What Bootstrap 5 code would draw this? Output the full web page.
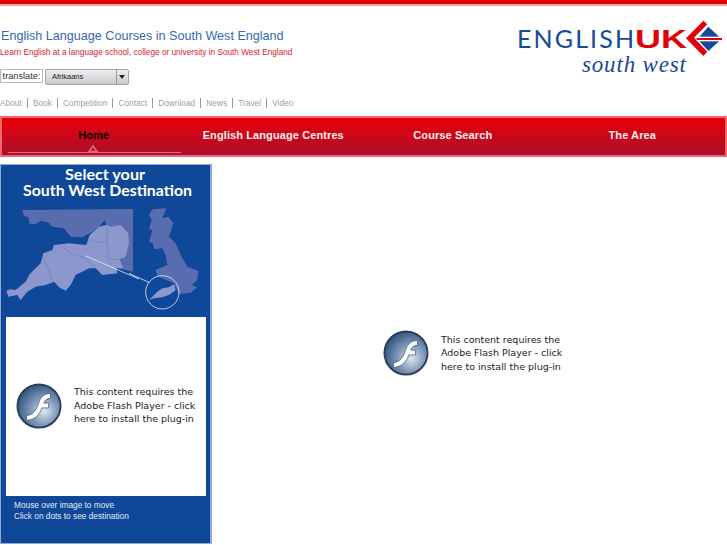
<!DOCTYPE html>
<html lang="en">

<head>
    <meta charset="UTF-8" />
    <meta name="viewport" content="width=device-width, initial-scale=1.0" />
    <title>English Language Courses in South West England</title>
    <link href="https://cdn.jsdelivr.net/npm/bootstrap@5.3.2/dist/css/bootstrap.min.css" rel="stylesheet" />
    <style>
        html, body {
            height: 545px;
            overflow: hidden;
        }

        body {
            background-color: #fff;
            font-family: "Liberation Sans", Arial, sans-serif;
        }

        .top-stripe {
            height: 6px;
            background-color: #e2000b;
            border-bottom: 2px solid #f59a9e;
        }

        .head-area {
            height: 110px;
        }

        .site-title {
            font-size: 12.6px;
            font-weight: 400;
            color: #3569b2;
            margin: 23px 0 0 1px;
            line-height: 15px;
        }

        .site-sub {
            font-size: 8.25px;
            color: #e0202c;
            margin: 3px 0 0;
            line-height: 12px;
        }

        .translate-row {
            margin-top: 10px;
        }

        .translate-label {
            font-size: 9.2px;
            line-height: 12px;
            height: 14px;
            width: 43px;
            text-align: center;
            color: #333;
            border: 1px solid #bbb;
            background: #fff;
        }

        .fake-select {
            width: 84px;
            height: 16px;
            margin-left: 2px;
            font-size: 7.5px;
            line-height: 14px;
            color: #222;
            border: 1px solid #a3a3a3;
            border-radius: 2px;
            background: linear-gradient(#eceef0, #c9cbce);
        }

        .fake-select span:first-child {
            flex: 1;
            padding-left: 6px;
        }

        .select-arrow {
            width: 12px;
            border-left: 1px solid #999;
            position: relative;
        }

        .select-arrow::after {
            content: "";
            position: absolute;
            left: 2px;
            top: 5px;
            border: 3.5px solid transparent;
            border-top: 4px solid #222;
        }

        .small-links {
            margin-top: 12px;
            font-size: 8.3px;
            line-height: 12px;
        }

        .small-links a {
            color: #a0a0a0;
            text-decoration: none;
            padding: 0 5.1px;
            border-left: 1px solid #999;
        }

        .small-links a:first-child {
            border-left: 0;
            padding-left: 0;
        }

        .uk-logo {
            width: 212px;
            height: 60px;
            margin-top: 14px;
        }

        .red-nav {
            height: 41px;
            border: 2px solid #f2686e;
            background: linear-gradient(#e2000a 10%, #ab102d);
            padding-left: 2px;
        }

        .red-nav a {
            width: 179.5px;
            text-align: center;
            color: #fbeeee;
            text-decoration: none;
            font-size: 11px;
            font-weight: 700;
            letter-spacing: .1px;
            line-height: 34px;
        }

        .red-nav a.here {
            color: #000;
            position: relative;
        }

        .red-nav a.here::before {
            content: "";
            position: absolute;
            left: 4px;
            width: 173px;
            bottom: 2px;
            height: 1px;
            background: #d9707f;
        }

        .here-mark {
            position: absolute;
            left: 84px;
            bottom: 3px;
            width: 10px;
            height: 7px;
        }

        .map-panel {
            width: 212px;
            height: 380px;
            margin-top: 7px;
            border: 1px solid #8fa8d6;
            border-width: 1px 2px 1px 1px;
            background: #0f4799;
        }

        .map-art {
            display: block;
            width: 209px;
            height: 152px;
        }

        .flash-box {
            width: 200px;
            height: 179px;
            margin-left: 5px;
            padding-bottom: 2px;
            background: #fff;
        }

        .flash-box .flash-icon {
            margin: 0 11px 0 10px;
        }

        .flash-box .flash-note {
            margin-left: 1px;
        }

        .panel-note {
            font-size: 8.3px;
            line-height: 11px;
            color: #e4e9f5;
            margin: 4px 0 0 13px;
        }

        .flash-note {
            font-family: "DejaVu Sans", Verdana, sans-serif;
            font-size: 9.5px;
            line-height: 13.6px;
            color: #222;
            white-space: nowrap;
        }

        .flash-icon {
            width: 46px;
            height: 46px;
            flex: none;
        }

        .main-area {
            flex: 1;
            height: 380px;
            margin-top: 6px;
            padding-left: 171px;
            gap: 12px;
        }
    </style>
</head>

<body>
    <div class="top-stripe"></div>

    <!-- Header -->
    <div class="head-area d-flex justify-content-between">
        <div>
            <h1 class="site-title">English Language Courses in South West England</h1>
            <p class="site-sub">Learn English at a language school, college or university in South West England</p>
            <div class="translate-row d-flex align-items-start">
                <span class="translate-label">translate:</span>
                <div class="fake-select d-flex"><span>Afrikaans</span><span class="select-arrow"></span></div>
            </div>
            <div class="small-links">
                <a href="#">About</a><a href="#">Book</a><a href="#">Competition</a><a href="#">Contact</a><a href="#">Download</a><a href="#">News</a><a href="#">Travel</a><a href="#">Video</a>
            </div>
        </div>
        <svg class="uk-logo" viewBox="0 0 212 60">
            <text x="2" y="28" font-family="Lato" font-size="25" fill="#164a96" textLength="117" lengthAdjust="spacing">ENGLISH</text>
            <text x="120" y="28" font-family="Liberation Sans" font-size="25.5" font-weight="700" fill="#e2000b" textLength="52" lengthAdjust="spacingAndGlyphs">UK</text>
            <text x="67" y="52" font-family="Liberation Serif" font-style="italic" font-size="23" fill="#164a96" textLength="104" lengthAdjust="spacing">south west</text>
            <g transform="translate(165 -5) scale(.3333)">
                <path d="M70 17 L82 28 L42 68 L82 110 L70 123 L18 70 Z" fill="#e2000b" />
                <path d="M85 35 L125 72 L85 108 L52 72 Z" fill="#164a96" />
                <path d="M50 65 H122 V79 H50 Z" fill="#fff" />
                <path d="M50 69 H126 V75 H50 Z" fill="#e2000b" />
            </g>
        </svg>
    </div>

    <!-- Main navigation -->
    <nav class="red-nav d-flex">
        <a class="here" href="#">Home
            <svg class="here-mark" viewBox="0 0 10 7"><path d="M5 1 L9 6.5 H1 Z" fill="none" stroke="#d9707f" stroke-width="1.5" /></svg>
        </a>
        <a href="#">English Language Centres</a>
        <a href="#">Course Search</a>
        <a href="#">The Area</a>
    </nav>

    <svg width="0" height="0" class="d-block">
        <defs>
            <radialGradient id="flashBall" cx="62%" cy="62%" r="70%">
                <stop offset="0" stop-color="#dfe6ee" />
                <stop offset=".45" stop-color="#7f98b8" />
                <stop offset="1" stop-color="#274a76" />
            </radialGradient>
            <symbol id="flashLogo" viewBox="0 0 48 48">
                <circle cx="24" cy="24" r="22.5" fill="url(#flashBall)" stroke="#2b3f5c" stroke-width="2" />
                <path d="M11 34 C19 33 21 28 24 20 C26 14 30 11 36 11 L36 16 C32 16 30 18 29 21 L34 21 L34 26 L27 26 C24 34 20 38 11 39 Z" fill="#fff" stroke="#34506f" stroke-width=".7" />
            </symbol>
        </defs>
    </svg>

    <div class="d-flex">
        <!-- Destination panel -->
        <aside class="map-panel">
            <svg class="map-art" viewBox="2 165 209 152">
                <text x="106" y="180" text-anchor="middle" font-family="Lato" font-weight="700" font-size="16" fill="#fff" textLength="80" lengthAdjust="spacingAndGlyphs">Select your</text>
                <text x="108.5" y="196" text-anchor="middle" font-family="Lato" font-weight="700" font-size="16" fill="#fff" textLength="169" lengthAdjust="spacingAndGlyphs">South West Destination</text>
                <g transform="translate(0 200) scale(.3333)">
                    <path d="M70 30 L402 27 L402 215 L360 205 L330 120 L318 60 L300 80 L280 95 L250 112 L215 110 L195 85 L160 80 L150 68 L125 62 L110 72 L92 72 L88 52 L75 48 Z" fill="#5a6cb0" />
                    <path d="M22 272 L35 268 L50 270 L80 245 L92 222 L125 190 L133 160 L160 150 L165 135 L210 130 L262 135 L272 105 L300 80 L322 75 L335 80 L365 75 L388 100 L390 130 L380 170 L362 178 L372 205 L352 205 L355 220 L310 225 L290 205 L270 205 L230 225 L215 255 L200 272 L180 262 L165 245 L140 255 L110 260 L85 275 L65 300 L55 285 L28 290 Z" fill="#8c97ce" />
                    <path d="M190 140 L215 160 L260 175 L290 205 M130 170 L150 210 L160 250 M270 122 L325 128 L328 155 L320 172 L335 178 L362 178 M325 128 L325 80" fill="none" stroke="#6f7dbb" stroke-width="2" />
                    <path d="M258 167 L420 237" stroke="#dfe4f2" stroke-width="2.5" />
                </g>
                <g transform="translate(130 200) scale(.3333)">
                    <path d="M0 220 L62 248" stroke="#dfe4f2" stroke-width="2.5" />
                    <path d="M70 28 L112 25 L100 55 L118 50 L133 70 L120 110 L140 130 L155 165 L175 200 L208 212 L205 240 L188 255 L205 262 L185 278 L150 282 L135 250 L85 228 L80 210 L115 195 L110 165 L100 145 L75 148 L72 130 L60 125 L70 90 L60 88 L68 60 L60 45 Z" fill="#5a6cb0" />
                    <path d="M60 300 L85 275 L100 265 L120 262 L135 252 L140 270 L120 285 L100 292 L75 295 Z" fill="#8c97ce" />
                    <circle cx="100" cy="277" r="50" fill="none" stroke="#dfe4f2" stroke-width="2.5" />
                </g>
            </svg>
            <div class="flash-box d-flex align-items-center">
                <svg class="flash-icon"><use href="#flashLogo" /></svg>
                <div class="flash-note">This content requires the<br>Adobe Flash Player - click<br>here to install the plug-in</div>
            </div>
            <p class="panel-note">Mouse over image to move<br>Click on dots to see destination</p>
        </aside>

        <!-- Main content -->
        <div class="main-area d-flex align-items-center">
            <svg class="flash-icon"><use href="#flashLogo" /></svg>
            <div class="flash-note">This content requires the<br>Adobe Flash Player - click<br>here to install the plug-in</div>
        </div>
    </div>

    <script src="https://cdn.jsdelivr.net/npm/bootstrap@5.3.2/dist/js/bootstrap.bundle.min.js"></script>
</body>

</html>
